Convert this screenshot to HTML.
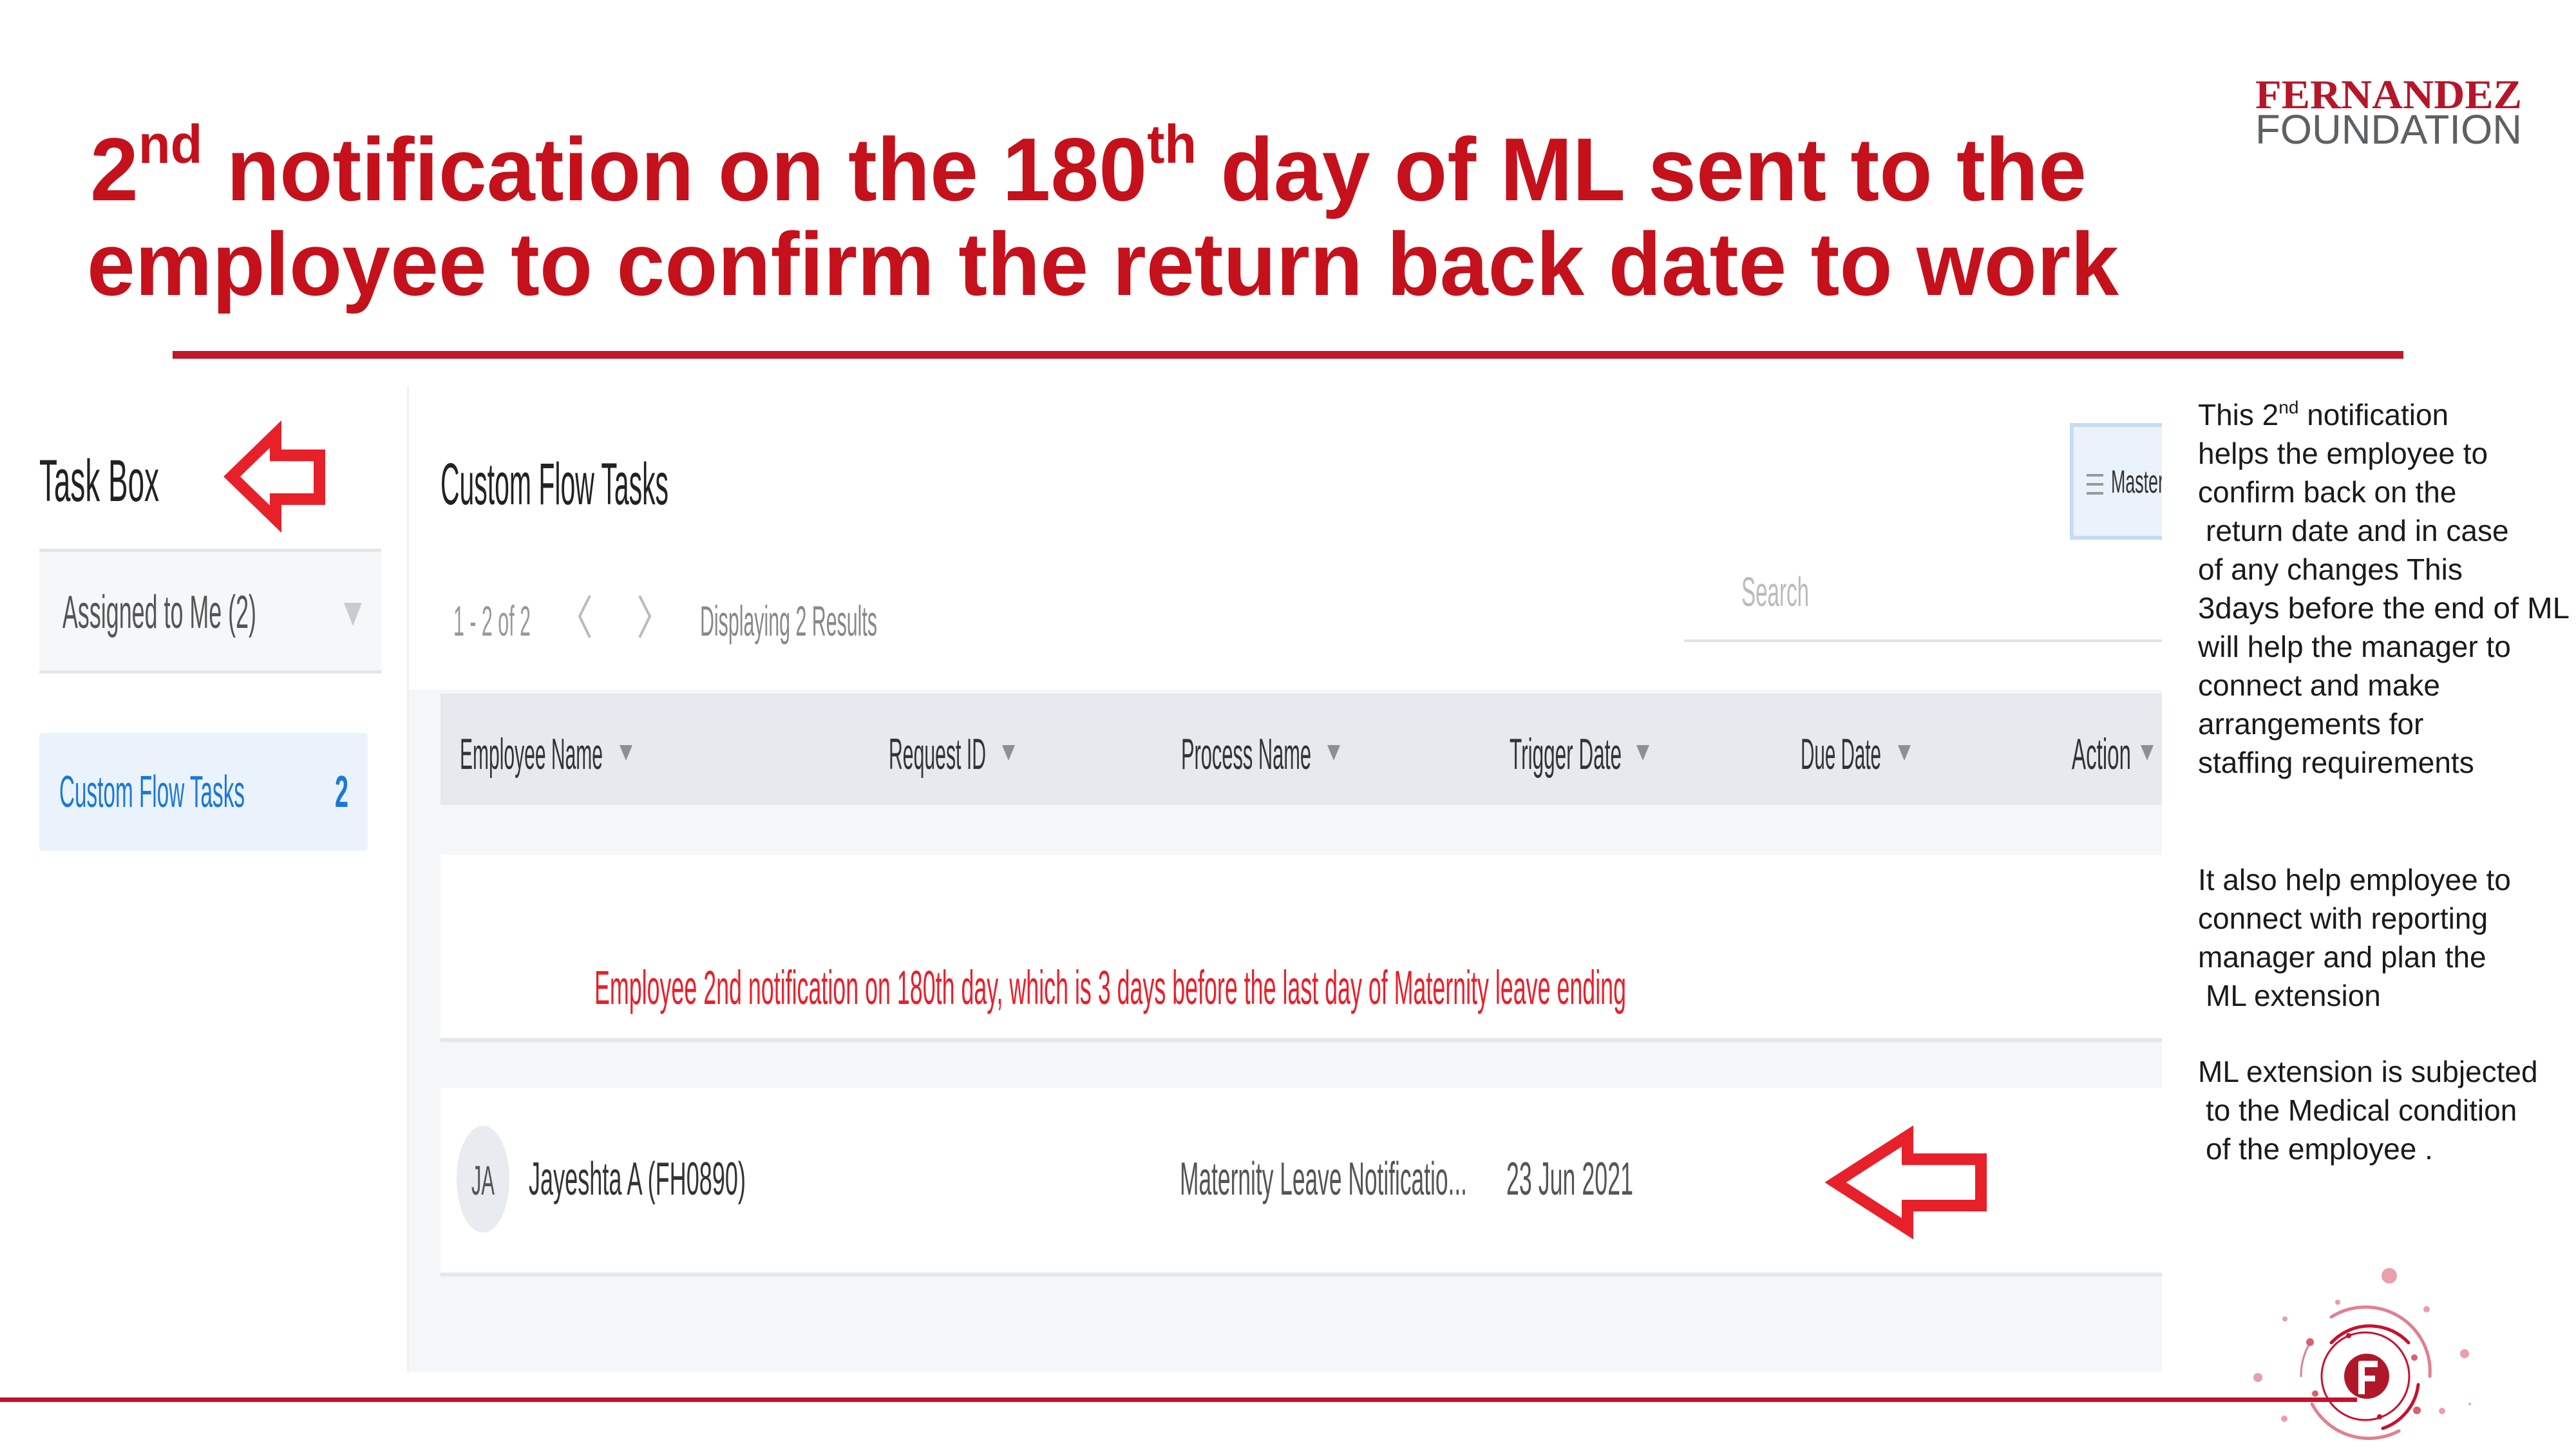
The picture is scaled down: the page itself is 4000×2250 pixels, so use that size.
<!DOCTYPE html>
<html><head><meta charset="utf-8"><style>
html,body{margin:0;padding:0;background:#fff;}
svg{display:block;}
</style></head><body>
<svg width="4000" height="2250" viewBox="0 0 4000 2250" xmlns="http://www.w3.org/2000/svg" font-family="Liberation Sans, Arial, sans-serif">
<rect width="4000" height="2250" fill="#fff"/>

<!-- Title -->
<g fill="#c4111b" font-weight="bold">
<text x="140" y="311" font-size="139" textLength="3100" lengthAdjust="spacingAndGlyphs">2<tspan font-size="84" dy="-58">nd</tspan><tspan dy="58"> notification on the 180</tspan><tspan font-size="84" dy="-58">th</tspan><tspan dy="58"> day of ML sent to the</tspan></text>
<text x="135" y="458" font-size="139" textLength="3155" lengthAdjust="spacingAndGlyphs">employee to confirm the return back date to work</text>
</g>
<rect x="268" y="545" width="3464" height="12" fill="#c0192c"/>

<!-- Logo -->
<text x="3502" y="168" font-size="64" fill="#b5172a" font-family="Liberation Serif, serif" font-weight="bold" textLength="414" lengthAdjust="spacingAndGlyphs">FERNANDEZ</text>
<text x="3502" y="223" font-size="64" fill="#5e6164" textLength="414" lengthAdjust="spacingAndGlyphs">FOUNDATION</text>

<!-- Sidebar -->
<rect x="632" y="600" width="3" height="1530" fill="#eef0f2"/>
<text x="61" y="778" font-size="92" fill="#222" textLength="186" lengthAdjust="spacingAndGlyphs">Task Box</text>
<polygon points="360,740 428,674 428,707 496,707 496,775 428,775 428,806" fill="#fff" stroke="#e8202a" stroke-width="18" stroke-linejoin="miter"/>
<rect x="61" y="852" width="531" height="194" fill="#f6f7f9"/>
<rect x="61" y="852" width="531" height="5" fill="#e3e5e8"/>
<rect x="61" y="1041" width="531" height="5" fill="#e3e5e8"/>
<text x="97" y="975" font-size="72" fill="#555" textLength="301" lengthAdjust="spacingAndGlyphs">Assigned to Me (2)</text>
<polygon points="534,936 562,936 548,972" fill="#c8ccd2"/>
<rect x="61" y="1138" width="510" height="183" rx="6" fill="#eaf2fb"/>
<text x="92" y="1253" font-size="70" fill="#1a78d8" textLength="288" lengthAdjust="spacingAndGlyphs">Custom Flow Tasks</text>
<text x="520" y="1253" font-size="70" fill="#1a78d8" font-weight="bold" textLength="21" lengthAdjust="spacingAndGlyphs">2</text>

<!-- Main panel -->
<rect x="635" y="1071" width="2722" height="1059" fill="#f4f6f8"/>
<text x="684" y="783" font-size="92" fill="#222" textLength="354" lengthAdjust="spacingAndGlyphs">Custom Flow Tasks</text>
<rect x="3217" y="660" width="145" height="175" fill="#eaf2fb" stroke="#c5dcf2" stroke-width="6"/>
<g stroke="#999" stroke-width="4"><line x1="3240" y1="738" x2="3266" y2="738"/><line x1="3240" y1="752" x2="3266" y2="752"/><line x1="3240" y1="766" x2="3266" y2="766"/></g>
<text x="3278" y="765" font-size="50" fill="#333" textLength="82" lengthAdjust="spacingAndGlyphs">Master</text>
<rect x="3357" y="600" width="60" height="1530" fill="#fff"/>

<text x="704" y="987" font-size="66" fill="#999" textLength="120" lengthAdjust="spacingAndGlyphs">1 - 2 of 2</text>
<polyline points="916,925 900,957 916,990" fill="none" stroke="#bbb" stroke-width="4"/>
<polyline points="993,925 1009,957 993,990" fill="none" stroke="#bbb" stroke-width="4"/>
<text x="1087" y="987" font-size="66" fill="#888" textLength="275" lengthAdjust="spacingAndGlyphs">Displaying 2 Results</text>
<text x="2704" y="941" font-size="64" fill="#bbb" textLength="105" lengthAdjust="spacingAndGlyphs">Search</text>
<rect x="2615" y="993" width="742" height="4" fill="#e0e3e6"/>

<!-- header row -->
<rect x="684" y="1077" width="2673" height="173" fill="#e6eaee"/>
<g font-size="68" fill="#333">
<text x="714" y="1194" textLength="222" lengthAdjust="spacingAndGlyphs">Employee Name</text>
<text x="1380" y="1194" textLength="151" lengthAdjust="spacingAndGlyphs">Request ID</text>
<text x="1834" y="1194" textLength="202" lengthAdjust="spacingAndGlyphs">Process Name</text>
<text x="2344" y="1194" textLength="174" lengthAdjust="spacingAndGlyphs">Trigger Date</text>
<text x="2796" y="1194" textLength="125" lengthAdjust="spacingAndGlyphs">Due Date</text>
<text x="3217" y="1194" textLength="92" lengthAdjust="spacingAndGlyphs">Action</text>
</g>
<g fill="#8a9096">
<polygon points="962,1157 982,1157 972,1181"/>
<polygon points="1556,1157 1576,1157 1566,1181"/>
<polygon points="2061,1157 2081,1157 2071,1181"/>
<polygon points="2541,1157 2561,1157 2551,1181"/>
<polygon points="2947,1157 2967,1157 2957,1181"/>
<polygon points="3324,1157 3344,1157 3334,1181"/>
</g>

<!-- card 1 -->
<rect x="684" y="1330" width="2673" height="288" fill="#e3e6ea"/>
<rect x="684" y="1327" width="2673" height="285" fill="#fff"/>
<text x="923" y="1559" font-size="74" fill="#e8202a" textLength="1602" lengthAdjust="spacingAndGlyphs">Employee 2nd notification on 180th day, which is  3 days before the last day of Maternity leave ending</text>

<!-- card 2 -->
<rect x="684" y="1692" width="2673" height="290" fill="#e3e6ea"/>
<rect x="684" y="1689" width="2673" height="287" fill="#fff"/>
<ellipse cx="750" cy="1831" rx="41" ry="83" fill="#e8ebef"/>
<text x="732" y="1855" font-size="64" fill="#555" textLength="36" lengthAdjust="spacingAndGlyphs">JA</text>
<text x="821" y="1855" font-size="72" fill="#333" textLength="337" lengthAdjust="spacingAndGlyphs">Jayeshta A (FH0890)</text>
<text x="1832" y="1855" font-size="72" fill="#555" textLength="446" lengthAdjust="spacingAndGlyphs">Maternity Leave Notificatio...</text>
<text x="2339" y="1855" font-size="72" fill="#555" textLength="197" lengthAdjust="spacingAndGlyphs">23 Jun 2021</text>
<polygon points="2850,1836 2962,1764 2962,1800 3076,1800 3076,1872 2962,1872 2962,1908" fill="#fff" stroke="#e8202a" stroke-width="18"/>

<!-- Right text -->
<g font-size="46" fill="#1a1a1a">
<text x="3413" y="660">This 2<tspan font-size="28" dy="-18">nd</tspan><tspan dy="18"> notification</tspan></text>
<text x="3413" y="720">helps the employee to</text>
<text x="3413" y="780">confirm back on the</text>
<text x="3425" y="840">return date and in case</text>
<text x="3413" y="900">of any changes This</text>
<text x="3413" y="960" textLength="577" lengthAdjust="spacingAndGlyphs">3days before the end of ML</text>
<text x="3413" y="1020">will help the manager to</text>
<text x="3413" y="1080">connect and make</text>
<text x="3413" y="1140">arrangements for</text>
<text x="3413" y="1200">staffing requirements</text>
<text x="3413" y="1382">It also help employee to</text>
<text x="3413" y="1442">connect with reporting</text>
<text x="3413" y="1502">manager and plan the</text>
<text x="3425" y="1562">ML extension</text>
<text x="3413" y="1680">ML extension is subjected</text>
<text x="3425" y="1740">to  the Medical condition</text>
<text x="3425" y="1800">of the employee .</text>
</g>

<!-- Bottom line and logo mark -->
<rect x="0" y="2170" width="3660" height="7" fill="#c8102e"/>
<g fill="none" stroke-linecap="round">
<circle cx="3673" cy="2137" r="68" stroke="#c8102e" stroke-width="3"/>
<path d="M3620 2085 A82 82 0 0 1 3740 2085" stroke="#c8102e" stroke-width="5"/>
<path d="M3755 2150 A82 82 0 0 1 3700 2218" stroke="#c8102e" stroke-width="5"/>
<path d="M3620 2045 A100 100 0 0 1 3773 2137" stroke="#e08090" stroke-width="5"/>
<path d="M3590 2180 A100 100 0 0 0 3725 2222" stroke="#e08090" stroke-width="5"/>
<path d="M3573 2137 A100 100 0 0 1 3587 2085" stroke="#e08090" stroke-width="3"/>
</g>
<g fill="#e8a0ac">
<circle cx="3710" cy="1981" r="12"/><circle cx="3630" cy="2022" r="4"/><circle cx="3768" cy="2033" r="5"/><circle cx="3827" cy="2102" r="7"/>
<circle cx="3506" cy="2139" r="7"/><circle cx="3548" cy="2048" r="4"/><circle cx="3547" cy="2203" r="5"/><circle cx="3792" cy="2191" r="5"/><circle cx="3835" cy="2180" r="2"/>
<circle cx="3587" cy="2084" r="6" fill="#d86070"/><circle cx="3595" cy="2164" r="5" fill="#d86070"/><circle cx="3749" cy="2108" r="5" fill="#d86070"/><circle cx="3753" cy="2190" r="6" fill="#d86070"/>
</g>
<circle cx="3647" cy="2074" r="4" fill="#c8102e"/><circle cx="3695" cy="2200" r="4" fill="#c8102e"/>
<circle cx="3675" cy="2137" r="35" fill="#b0182a"/>
<path d="M3662 2165 L3662 2116 Q3662 2113 3666 2113 L3692 2113 L3692 2123 L3672 2123 L3672 2136 L3688 2136 L3688 2145 L3672 2145 L3672 2165 Z" fill="#fff"/>
</svg>
</body></html>
